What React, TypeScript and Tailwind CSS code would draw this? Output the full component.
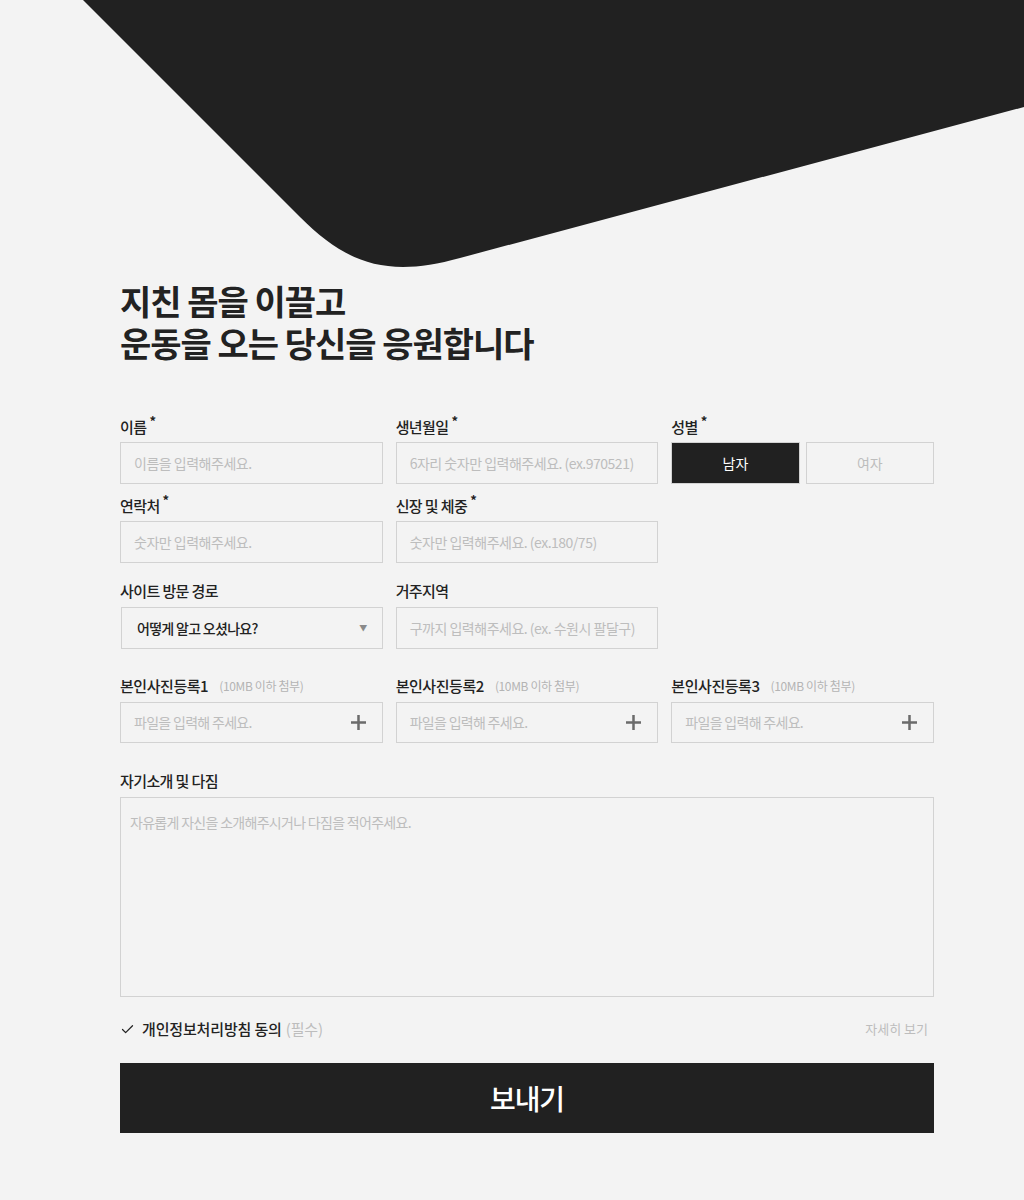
import { Check } from 'lucide-react';

const font = { fontFamily: '"Noto Sans CJK KR", "Noto Sans", sans-serif' };

function Label({ text, required }: { text: string; required?: boolean }) {
  return (
    <div className="mb-[5px] flex h-[20px] items-center text-[15px] leading-[20px] font-medium tracking-[-0.04em] text-[#222]">
      <span>{text}</span>
      {required && <span className="relative -top-[6px] ml-[3px] text-[13px] font-bold">*</span>}
    </div>
  );
}

function TextInput({ placeholder }: { placeholder: string }) {
  return (
    <div className="flex h-[42px] items-center border border-[#d2d2d2] px-[13px] text-[14px] tracking-[-0.035em] text-[#bdbdbd]">
      {placeholder}
    </div>
  );
}

function PlusIcon() {
  return (
    <svg width="15" height="15" viewBox="0 0 15 15" className="text-[#6b6b6b]">
      <rect x="0" y="6.25" width="15" height="2.5" fill="currentColor" />
      <rect x="6.25" y="0" width="2.5" height="15" fill="currentColor" />
    </svg>
  );
}

function FileField({ n }: { n: number }) {
  return (
    <div>
      <div className="mb-[6px] flex h-[20px] items-center">
        <span className="text-[15px] font-medium tracking-[-0.03em] text-[#222]">본인사진등록{n}</span>
        <span className="ml-[11px] text-[12px] tracking-[-0.03em] text-[#b4b4b4]">(10MB 이하 첨부)</span>
      </div>
      <div className="flex h-[41px] items-center justify-between border border-[#d2d2d2] pl-[13px] pr-[16px] text-[14px] tracking-[-0.05em] text-[#bdbdbd]">
        <span>파일을 입력해 주세요.</span>
        <PlusIcon />
      </div>
    </div>
  );
}

export default function App() {
  return (
    <div className="min-h-[1200px] bg-[#f3f3f3]" style={font}>
      <svg className="block h-[280px] w-[1024px]" viewBox="0 0 1024 280">
        <path d="M83 0 H1024 V107 L460 258 C385 279 345 262 300 217 Z" fill="#212121" />
      </svg>

      <div className="ml-[120px] w-[814px] pb-[67px]">
        <h1 className="text-[34px] leading-[42px] font-bold tracking-[-0.03em] text-[#222]">
          지친 몸을 이끌고
          <br />
          운동을 오는 당신을 응원합니다
        </h1>

        <div className="mt-[53px] grid grid-cols-3 gap-x-[13px] gap-y-[12px]">
          <div>
            <Label text="이름" required />
            <TextInput placeholder="이름을 입력해주세요." />
          </div>
          <div>
            <Label text="생년월일" required />
            <TextInput placeholder="6자리 숫자만 입력해주세요. (ex.970521)" />
          </div>
          <div>
            <Label text="성별" required />
            <div className="grid grid-cols-2 gap-[6px]">
              <div className="flex h-[42px] items-center justify-center border border-[#d2d2d2] bg-[#212121] text-[14px] text-white">
                남자
              </div>
              <div className="flex h-[42px] items-center justify-center border border-[#d2d2d2] text-[14px] text-[#bdbdbd]">
                여자
              </div>
            </div>
          </div>
          <div>
            <Label text="연락처" required />
            <TextInput placeholder="숫자만 입력해주세요." />
          </div>
          <div>
            <Label text="신장 및 체중" required />
            <TextInput placeholder="숫자만 입력해주세요. (ex.180/75)" />
          </div>
        </div>

        <div className="mt-[18px] grid grid-cols-3 gap-x-[13px]">
          <div>
            <div className="mb-[6px] h-[20px] text-[15px] leading-[20px] font-medium tracking-[-0.04em] text-[#222]">사이트 방문 경로</div>
            <div className="ml-[1px] flex h-[42px] items-center justify-between border border-[#d2d2d2] pl-[15px] pr-[15px] text-[14px] font-medium tracking-[-0.05em] text-[#222]">
              <span>어떻게 알고 오셨나요?</span>
              <span className="text-[8px] text-[#8a8a8a]">▼</span>
            </div>
          </div>
          <div>
            <div className="mb-[6px] h-[20px] text-[15px] leading-[20px] font-medium tracking-[-0.04em] text-[#222]">거주지역</div>
            <TextInput placeholder="구까지 입력해주세요. (ex. 수원시 팔달구)" />
          </div>
        </div>

        <div className="mt-[27px] grid grid-cols-3 gap-x-[13px]">
          <FileField n={1} />
          <FileField n={2} />
          <FileField n={3} />
        </div>

        <div className="mt-[28px]">
          <div className="mb-[6px] h-[20px] text-[15px] leading-[20px] font-medium tracking-[-0.04em] text-[#222]">자기소개 및 다짐</div>
          <div className="h-[200px] border border-[#d2d2d2] px-[9px] pt-[14px] text-[14px] tracking-[-0.05em] text-[#bdbdbd]">
            자유롭게 자신을 소개해주시거나 다짐을 적어주세요.
          </div>
        </div>

        <div className="mt-[22px] flex h-[20px] items-center justify-between">
          <div className="flex items-center">
            <Check className="h-[15px] w-[15px] text-[#222]" strokeWidth={2} />
            <span className="ml-[7px] text-[15px] font-medium tracking-[-0.01em] text-[#222]">개인정보처리방침 동의</span>
            <span className="ml-[4px] text-[15px] tracking-[-0.01em] text-[#bdbdbd]">(필수)</span>
          </div>
          <span className="mr-[6px] text-[13px] tracking-[0em] text-[#bdbdbd]">자세히 보기</span>
        </div>

        <button className="mt-[24px] flex h-[70px] w-full items-center justify-center bg-[#212121] text-[28px] font-medium tracking-[-0.04em] text-white">
          보내기
        </button>
      </div>
    </div>
  );
}
